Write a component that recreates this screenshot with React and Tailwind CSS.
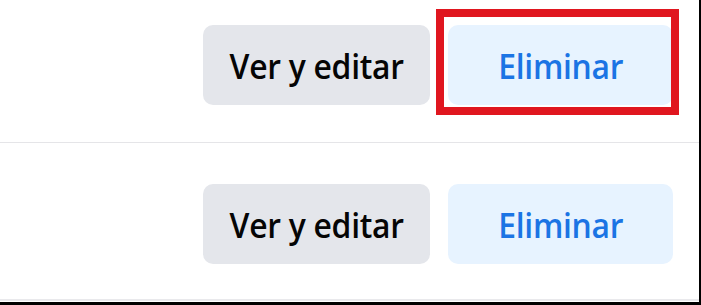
import React from 'react';

const font = { fontFamily: '"Open Sans", "Noto Sans", sans-serif' };

const Label = ({ children }) => (
    <span className="inline-block scale-x-[0.91] text-[35px] leading-none font-semibold tracking-[-0.3px]">{children}</span>
);

const ActionRow = ({ className, highlight }) => (
    <div className={`flex justify-end gap-[18px] pr-[26px] ${className}`}>
        <button className="flex h-[80px] w-[227px] items-center justify-center rounded-[10px] bg-[#e4e6eb] text-[#050505]">
            <Label>Ver y editar</Label>
        </button>
        <div className="relative">
            <button className="flex h-[80px] w-[225px] items-center justify-center rounded-[10px] bg-[#e7f3ff] text-[#1b74e4]">
                <Label>Eliminar</Label>
            </button>
            {/* red annotation box */}
            {highlight && (
                <div className="absolute left-[-12px] top-[-16px] h-[106px] w-[243px] border-[8px] border-[#e0161f]" />
            )}
        </div>
    </div>
);

export default function App() {
    return (
        <div className="h-[305px] w-[701px] bg-white" style={font}>
            <div className="h-[305px] w-[701px] border-r-2 border-b-[3px] border-black bg-white">
                <div className="border-b border-[#e5e5e8]">
                    <ActionRow className="pt-[25px] pb-[37px]" highlight />
                </div>
                <div className="border-b-2 border-[#e9e9ec]">
                    <ActionRow className="pt-[41px] pb-[35px]" />
                </div>
            </div>
        </div>
    );
}
